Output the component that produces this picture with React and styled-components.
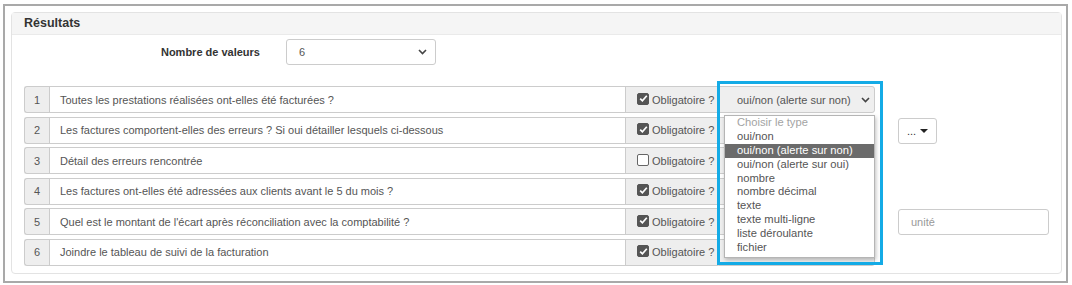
import React from "react";
import styled, { createGlobalStyle } from "styled-components";

const GlobalStyle = createGlobalStyle`
  body {
    margin: 0;
    background: #ffffff;
    font-family: "Liberation Sans", Arial, sans-serif;
  }
`;

const questions = [
  { text: "Toutes les prestations réalisées ont-elles été facturées ?", required: true },
  { text: "Les factures comportent-elles des erreurs ? Si oui détailler lesquels ci-dessous", required: true, extra: "button" },
  { text: "Détail des erreurs rencontrée", required: false },
  { text: "Les factures ont-elles été adressées aux clients avant le 5 du mois ?", required: true },
  { text: "Quel est le montant de l'écart après réconciliation avec la comptabilité ?", required: true, extra: "unit" },
  { text: "Joindre le tableau de suivi de la facturation", required: true },
];

const types = [
  "Choisir le type",
  "oui/non",
  "oui/non (alerte sur non)",
  "oui/non (alerte sur oui)",
  "nombre",
  "nombre décimal",
  "texte",
  "texte multi-ligne",
  "liste déroulante",
  "fichier",
];

function Chevron() {
  return (
    <svg width="9" height="6" viewBox="0 0 9 6">
      <path d="M1 1l3.5 3.5L8 1" fill="none" stroke="#444" strokeWidth="1.6" />
    </svg>
  );
}

function CheckBox({ checked }) {
  return (
    <Box $checked={checked}>
      {checked && (
        <svg width="11" height="11" viewBox="0 0 11 11">
          <path d="M2.2 5.6l2.2 2.2 4.4-5" fill="none" stroke="#fff" strokeWidth="1.7" />
        </svg>
      )}
    </Box>
  );
}

export default function App() {
  return (
    <>
      <GlobalStyle />
      <Frame>
        <Panel>
          <Heading>Résultats</Heading>
          <PanelBody>
            <CountRow>
              <CountLabel>Nombre de valeurs</CountLabel>
              <CountSelect>
                <span>6</span>
                <Chevron />
              </CountSelect>
            </CountRow>
            <Rows>
              {questions.map((q, i) => (
                <Row key={i}>
                  <Group>
                    <NumAddon>{i + 1}</NumAddon>
                    <TextField>{q.text}</TextField>
                    <RequiredAddon>
                      <CheckBox checked={q.required} />
                      Obligatoire ?
                    </RequiredAddon>
                    <TypeSelect>
                      {i === 0 && <span>oui/non (alerte sur non)</span>}
                      <Chevron />
                    </TypeSelect>
                  </Group>
                  <Extra>
                    {q.extra === "button" && (
                      <MoreButton>
                        ...
                        <Caret />
                      </MoreButton>
                    )}
                    {q.extra === "unit" && <UnitInput>unité</UnitInput>}
                  </Extra>
                </Row>
              ))}
              <DropList>
                {types.map((t, i) => (
                  <DropItem key={t} $muted={i === 0} $active={i === 2}>
                    {t}
                  </DropItem>
                ))}
              </DropList>
              <Highlight />
            </Rows>
          </PanelBody>
        </Panel>
      </Frame>
    </>
  );
}

const Frame = styled.div`
  margin: 4px 4px 2px 3px;
  border: 2px solid #a9a9a9;
  padding: 6px 4px 8px 6px;
  box-sizing: border-box;
  height: 279px;
`;

const Panel = styled.div`
  border: 1px solid #e3e3e3;
  border-radius: 4px;
  height: 262px;
  box-sizing: border-box;
`;

const Heading = styled.div`
  height: 21px;
  background: #f5f5f5;
  border-bottom: 1px solid #eaeaea;
  padding: 0 12px;
  font-size: 12.5px;
  font-weight: bold;
  color: #333;
  line-height: 21px;
`;

const PanelBody = styled.div`
  padding: 4px 12px 0 12px;
`;

const CountRow = styled.div`
  display: flex;
  align-items: center;
  height: 26px;
`;

const CountLabel = styled.div`
  width: 236px;
  text-align: right;
  font-size: 11px;
  font-weight: bold;
  color: #333;
  margin-right: 26px;
`;

const CountSelect = styled.div`
  width: 150px;
  height: 26px;
  box-sizing: border-box;
  border: 1px solid #ccc;
  border-radius: 3px;
  padding: 0 8px 0 12px;
  display: flex;
  align-items: center;
  justify-content: space-between;
  font-size: 11px;
  color: #555;
`;

const Rows = styled.div`
  position: relative;
  margin-top: 21px;
  display: flex;
  flex-direction: column;
  gap: 3.6px;
`;

const Row = styled.div`
  display: grid;
  grid-template-columns: 851px 151px;
  column-gap: 23px;
  height: 27px;
`;

const Group = styled.div`
  display: flex;
  height: 27px;
  font-size: 11px;
  color: #555;
`;

const NumAddon = styled.div`
  width: 25px;
  flex: none;
  box-sizing: border-box;
  border: 1px solid #ccc;
  border-right: none;
  border-radius: 3px 0 0 3px;
  background: #eee;
  display: flex;
  align-items: center;
  justify-content: center;
`;

const TextField = styled.div`
  width: 577px;
  flex: none;
  box-sizing: border-box;
  border: 1px solid #ccc;
  padding-left: 10px;
  display: flex;
  align-items: center;
  background: #fff;
  white-space: nowrap;
`;

const RequiredAddon = styled.div`
  width: 92px;
  flex: none;
  box-sizing: border-box;
  border: 1px solid #ccc;
  border-left: none;
  border-right: none;
  background: #eee;
  display: flex;
  align-items: center;
  padding-left: 11px;
  gap: 3px;
  white-space: nowrap;
`;

const Box = styled.span`
  width: 12px;
  height: 12px;
  flex: none;
  box-sizing: border-box;
  border-radius: 2px;
  border: 1px solid ${(p) => (p.$checked ? "#555" : "#666")};
  background: ${(p) => (p.$checked ? "#555" : "#fff")};
  display: inline-flex;
  align-items: center;
  justify-content: center;
  margin-top: -2px;
  svg {
    flex: none;
  }
`;

const TypeSelect = styled.div`
  width: 157px;
  flex: none;
  box-sizing: border-box;
  border: 1px solid #ccc;
  border-radius: 0 3px 3px 0;
  background: #efefef;
  display: flex;
  align-items: center;
  justify-content: space-between;
  padding: 0 4px 0 18px;
  white-space: nowrap;
  svg {
    margin-left: auto;
  }
`;

const Extra = styled.div`
  display: flex;
  align-items: center;
`;

const MoreButton = styled.div`
  width: 39px;
  height: 26px;
  margin-top: 1px;
  box-sizing: border-box;
  border: 1px solid #ccc;
  border-radius: 3px;
  display: flex;
  align-items: center;
  justify-content: center;
  gap: 4px;
  font-size: 11px;
  color: #333;
`;

const Caret = styled.span`
  width: 0;
  height: 0;
  border-left: 4px solid transparent;
  border-right: 4px solid transparent;
  border-top: 4px solid #222;
`;

const UnitInput = styled.div`
  width: 151px;
  height: 26px;
  box-sizing: border-box;
  border: 1px solid #ccc;
  border-radius: 3px;
  display: flex;
  align-items: center;
  padding-left: 12px;
  font-size: 11px;
  color: #999;
`;

const DropList = styled.div`
  position: absolute;
  left: 700px;
  top: 29px;
  width: 151px;
  box-sizing: border-box;
  background: #fff;
  border: 1px solid #b5b5b5;
  box-shadow: 1px 2px 4px rgba(0, 0, 0, 0.25);
  padding: 0 0 2px;
`;

const DropItem = styled.div`
  height: 13.9px;
  line-height: 13.9px;
  padding-left: 12px;
  font-size: 11.2px;
  white-space: nowrap;
  color: ${(p) => (p.$active ? "#fff" : p.$muted ? "#a3a3a3" : "#555")};
  background: ${(p) => (p.$active ? "#6b6b6b" : "transparent")};
`;

const Highlight = styled.div`
  position: absolute;
  left: 693px;
  top: -5px;
  width: 166px;
  height: 184px;
  box-sizing: border-box;
  border: 3px solid #14abe6;
  pointer-events: none;
`;
